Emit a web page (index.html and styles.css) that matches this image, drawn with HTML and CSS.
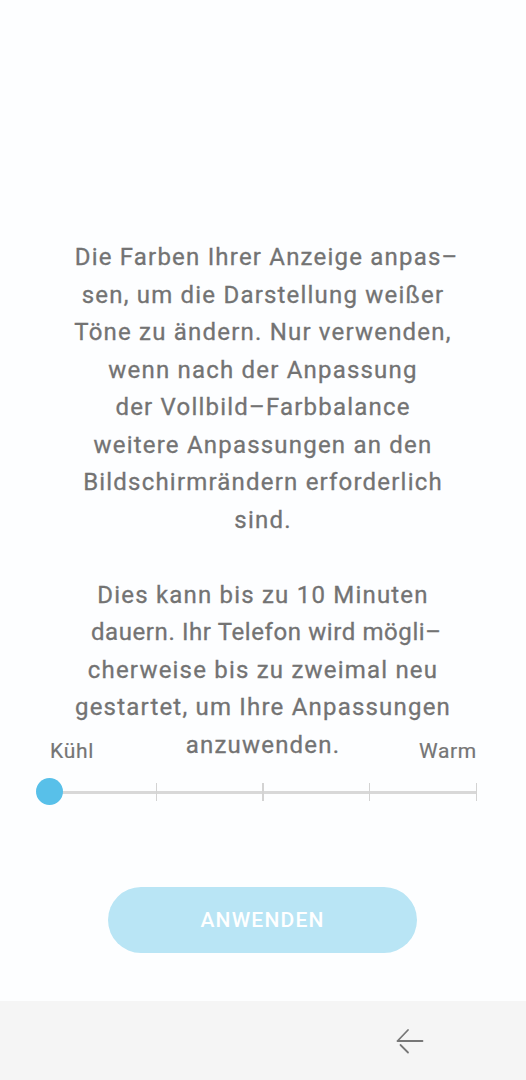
FILE: index.html
```html
<!DOCTYPE html>
<html lang="de">
<head>
<meta charset="utf-8">
<link rel="stylesheet" href="styles.css">
</head>
<body>
<div class="screen">
  <div class="content">
    <div class="desc">
      <div class="line">&nbsp;Die Farben Ihrer Anzeige anpas–</div>
      <div class="line">sen, um die Darstellung weißer</div>
      <div class="line">Töne zu ändern. Nur verwenden,</div>
      <div class="line">wenn nach der Anpassung</div>
      <div class="line">der Vollbild–Farbbalance</div>
      <div class="line">weitere Anpassungen an den</div>
      <div class="line">Bildschirmrändern erforderlich</div>
      <div class="line">sind.</div>
      <div class="line">&nbsp;</div>
      <div class="line">Dies kann bis zu 10 Minuten</div>
      <div class="line tight">&nbsp;dauern. Ihr Telefon wird mögli–</div>
      <div class="line">cherweise bis zu zweimal neu</div>
      <div class="line">gestartet, um Ihre Anpassungen</div>
      <div class="line">anzuwenden.</div>
    </div>
    <div class="slider">
      <div class="labels">
        <span>Kühl</span>
        <span>Warm</span>
      </div>
      <div class="track-row">
        <div class="track">
          <span class="tick"></span>
          <span class="tick"></span>
          <span class="tick"></span>
          <span class="tick"></span>
          <span class="tick"></span>
        </div>
        <span class="thumb"></span>
      </div>
    </div>
    <div class="actions">
      <button class="apply">ANWENDEN</button>
    </div>
  </div>
  <div class="navbar">
    <svg class="back" width="30" height="30" viewBox="0 0 30 30">
      <path d="M2.5 14 L13 3 M2.5 14 H27.5 M5.5 18 L13 25.5" fill="none" stroke="#777" stroke-width="1.8" stroke-linecap="round"/>
    </svg>
  </div>
</div>
</body>
</html>
```
FILE: styles.css
```css
html, body {
  margin: 0;
  padding: 0;
}
body {
  background: #fdfeff;
  font-family: Roboto, "Liberation Sans", sans-serif;
}
.screen {
  width: 526px;
  height: 1080px;
  display: flex;
  flex-direction: column;
}
.content {
  height: 1001px;
  display: flex;
  flex-direction: column;
}
.desc {
  padding-top: 239px;
  color: #737373;
  font-size: 24px;
  letter-spacing: 1.2px;
  line-height: 37.5px;
  text-align: center;
  -webkit-text-stroke: 0.3px #737373;
}
.line {
  height: 37.5px;
  white-space: nowrap;
}
.line.tight {
  letter-spacing: 0.6px;
}
.slider {
  margin-top: -25px;
  padding: 0 49px 0 49px;
}
.labels {
  display: flex;
  justify-content: space-between;
  color: #757575;
  font-size: 21px;
  letter-spacing: 0.7px;
  line-height: 24px;
  margin-left: 1px;
  margin-right: 0;
  -webkit-text-stroke: 0.2px #757575;
}
.track-row {
  position: relative;
  margin-top: 15px;
  height: 28px;
  display: flex;
  align-items: center;
}
.track {
  flex: 1;
  height: 3px;
  background: #d8d8d8;
  display: flex;
  justify-content: space-between;
  align-items: center;
}
.tick {
  width: 1.5px;
  height: 18px;
  background: #d3d3d3;
}
.tick:first-child {
  visibility: hidden;
}
.thumb {
  position: absolute;
  left: -13.5px;
  top: 0;
  width: 27px;
  height: 27px;
  border-radius: 50%;
  background: #58c0e9;
}
.actions {
  margin-top: 81px;
  display: flex;
  justify-content: center;
  padding-right: 1px;
}
.apply {
  width: 309px;
  height: 66px;
  border: none;
  border-radius: 33px;
  background: #b9e5f5;
  color: #ffffff;
  font-family: Roboto, "Liberation Sans", sans-serif;
  font-weight: 500;
  font-size: 21px;
  letter-spacing: 1.2px;
  padding: 0;
}
.navbar {
  height: 79px;
  background: #f5f5f5;
  display: flex;
  align-items: center;
  justify-content: flex-end;
  padding-right: 101px;
}
.back {
  display: block;
  margin-top: 2px;
}
```
